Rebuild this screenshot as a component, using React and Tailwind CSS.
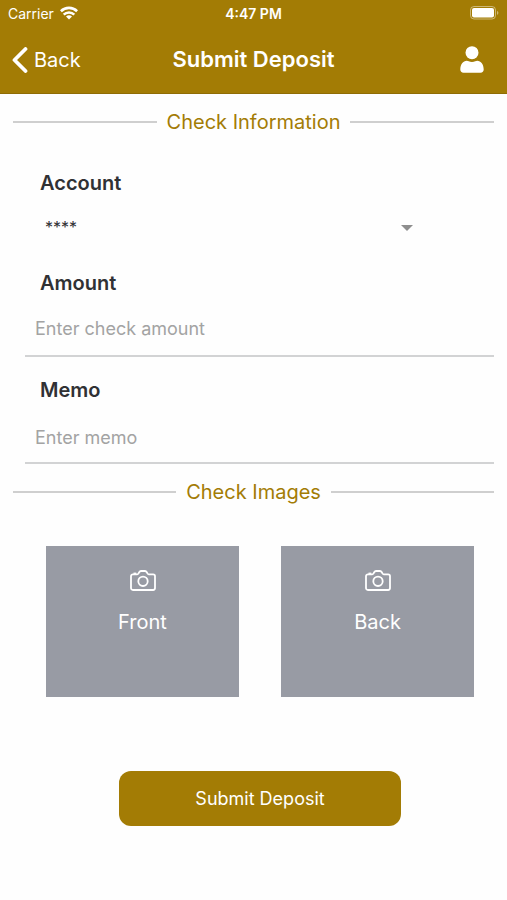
import { useState } from "react";

function WifiIcon() {
  return (
    <svg viewBox="0 0 18 14" className="h-[14px] w-[18px]" fill="none" stroke="currentColor" strokeWidth="2.6" aria-hidden="true">
      <path d="M0.9 5.2a11.6 11.6 0 0 1 16.2 0" />
      <path d="M3.7 8.6a7.6 7.6 0 0 1 10.6 0" />
      <path d="M9 13.6 6 10.6a4.3 4.3 0 0 1 6 0z" fill="currentColor" stroke="none" />
    </svg>
  );
}

function BatteryIcon() {
  return (
    <svg viewBox="0 0 29 14" className="h-[14px] w-[29px]" aria-hidden="true">
      <rect x="0.5" y="0.5" width="25" height="12.5" rx="3.5" fill="none" stroke="#fff" strokeOpacity="0.45" />
      <rect x="2" y="2" width="22" height="9.5" rx="2" fill="#fff" />
      <path d="M27 4.7c1.9.9 1.9 3.3 0 4.2z" fill="#fff" fillOpacity="0.45" />
    </svg>
  );
}

function CameraIcon() {
  return (
    <svg viewBox="0 0 26 21" className="h-[21px] w-[26px]" fill="none" stroke="currentColor" strokeWidth="1.8" strokeLinejoin="round" aria-hidden="true">
      <path d="M1 6.2c0-1.1.8-1.9 1.9-1.9h4.3c.6 0 .9-.2 1.2-.7l.8-1.4C9.7 1.3 10.2 1 11 1h4c.8 0 1.3.3 1.8 1.2l.8 1.4c.3.5.6.7 1.2.7h4.3c1.1 0 1.9.8 1.9 1.9v11.9c0 1.1-.8 1.9-1.9 1.9H2.9C1.8 20 1 19.2 1 18.1z" />
      <path d="M3.5 3.4h2.8" strokeWidth="1.6" />
      <circle cx="13" cy="11.3" r="4.7" />
    </svg>
  );
}

function SectionTitle({ children }) {
  return (
    <div className="flex items-center gap-[10px]">
      <span className="h-[2px] flex-1 bg-[#cfcfcf]" />
      <h2 className="text-[20px] leading-7 text-[#a37c05]">{children}</h2>
      <span className="h-[2px] flex-1 bg-[#cfcfcf]" />
    </div>
  );
}

function ImageButton({ label }) {
  return (
    <button type="button" className="flex h-[151px] flex-col items-center gap-[17px] bg-[#989ba4] pt-6 text-white">
      <CameraIcon />
      <span className="text-[20px] leading-7">{label}</span>
    </button>
  );
}

function App() {
  const [account, setAccount] = useState("****");
  const [amount, setAmount] = useState("");
  const [memo, setMemo] = useState("");

  return (
    <div className="min-h-screen bg-[#fefefe] font-[Inter,sans-serif]">
      {/* Header */}
      <header className="border-b border-[#8f6c04] bg-[#a37c05] text-white">
        <div className="grid h-[26px] grid-cols-3 items-center px-2">
          <div className="flex items-center gap-[6px] text-[14px]">
            <span>Carrier</span>
            <WifiIcon />
          </div>
          <span className="text-center text-[14px] font-semibold">4:47 PM</span>
          <div className="flex justify-end">
            <BatteryIcon />
          </div>
        </div>
        <div className="grid h-[67px] grid-cols-[1fr_auto_1fr] items-center px-3">
          <button type="button" className="flex items-center gap-[6px] text-[20px]">
            <svg viewBox="0 0 16 26" className="h-[26px] w-[16px]" fill="none" stroke="currentColor" strokeWidth="3.8" strokeLinecap="round" strokeLinejoin="round" aria-hidden="true">
              <path d="M13.5 2 2.5 13l11 11" />
            </svg>
            <span>Back</span>
          </button>
          <h1 className="text-[22px] font-semibold">Submit Deposit</h1>
          <button type="button" aria-label="Profile" className="justify-self-end pr-[11px]">
            <svg viewBox="0 0 24 27" className="h-[27px] w-6" fill="currentColor" aria-hidden="true">
              <circle cx="12" cy="6.7" r="6.5" />
              <path d="M0.3 23.5c0-5 2.7-8.7 6.6-8.7.9 0 2.5 1.2 5.1 1.2s4.2-1.2 5.1-1.2c3.9 0 6.6 3.700 6.600 8.700 0 2-1.200 3.200-3.200 3.200h-17c-2 0-3.200-1.200-3.200-3.200z" />
            </svg>
          </button>
        </div>
      </header>

      <main className="px-[13px] pb-8 pt-[14px]">
        <SectionTitle>Check Information</SectionTitle>

        <div className="pl-3 text-[#303134]">
          <label htmlFor="account" className="mt-[35px] block pl-[15px] text-[20px] font-semibold leading-6">
            Account
          </label>
          <div className="relative ml-5 mr-[81px] mt-4">
            <select
              id="account"
              value={account}
              onChange={(e) => setAccount(e.target.value)}
              className="block h-8 w-full appearance-none bg-transparent text-[16px] outline-none"
            >
              <option value="****">****</option>
            </select>
            <svg viewBox="0 0 12 6" className="pointer-events-none absolute right-0 top-[14px] h-[6px] w-3" fill="#8e8e8e" aria-hidden="true">
              <path d="M0 0h12L6 6z" />
            </svg>
          </div>

          <label htmlFor="amount" className="mt-7 block pl-[15px] text-[20px] font-semibold leading-6">
            Amount
          </label>
          <input
            id="amount"
            type="text"
            placeholder="Enter check amount"
            value={amount}
            onChange={(e) => setAmount(e.target.value)}
            className="mt-[22px] block w-full border-b-2 border-[#d2d3d4] bg-transparent pb-[14px] pl-[10px] text-[18px] leading-6 outline-none placeholder:text-[#a3a3a3]"
          />

          <label htmlFor="memo" className="mt-[21px] block pl-[15px] text-[20px] font-semibold leading-6">
            Memo
          </label>
          <input
            id="memo"
            type="text"
            placeholder="Enter memo"
            value={memo}
            onChange={(e) => setMemo(e.target.value)}
            className="mt-6 block w-full border-b-2 border-[#d2d3d4] bg-transparent pb-3 pl-[10px] text-[18px] leading-6 outline-none placeholder:text-[#a3a3a3]"
          />
        </div>

        <div className="mt-[14px]">
          <SectionTitle>Check Images</SectionTitle>
        </div>

        <div className="ml-[33px] mr-5 mt-10">
          <div className="grid grid-cols-2 gap-[42px]">
            <ImageButton label="Front" />
            <ImageButton label="Back" />
          </div>
          <button type="button" className="mx-auto mt-[74px] block h-[55px] w-[282px] max-w-full rounded-xl bg-[#a37c05] text-[18px] text-white">
            Submit Deposit
          </button>
        </div>
      </main>
    </div>
  );
}

export default App;
